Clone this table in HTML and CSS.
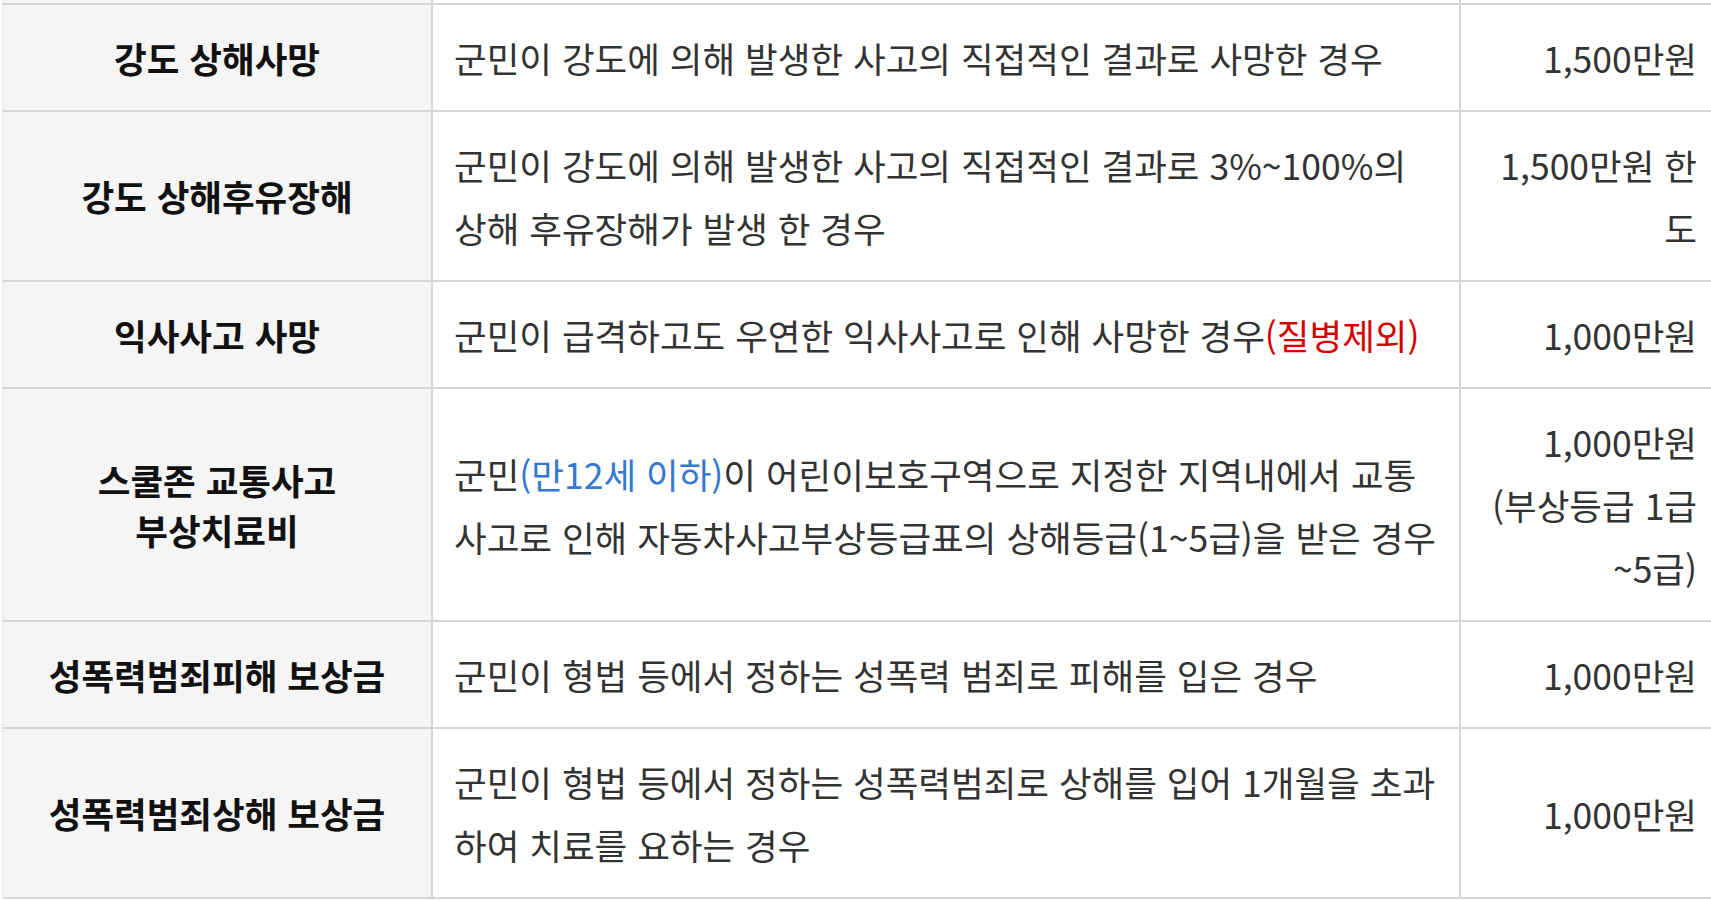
FILE: index.html
```html
<!DOCTYPE html>
<html lang="ko">
<head>
<meta charset="utf-8">
<title>보장내용</title>
<link rel="stylesheet" href="styles.css">
</head>
<body>
<div class="tbl">
  <div class="c c1 filler"></div><div class="c c2 filler"></div><div class="c c3 filler"></div>

  <div class="c c1"><p>강도 상해사망</p></div>
  <div class="c c2"><p>군민이 강도에 의해 발생한 사고의 직접적인 결과로 사망한 경우</p></div>
  <div class="c c3"><p>1,500만원</p></div>

  <div class="c c1"><p>강도 상해후유장해</p></div>
  <div class="c c2"><p>군민이 강도에 의해 발생한 사고의 직접적인 결과로 3%~100%의 상해 후유장해가 발생 한 경우</p></div>
  <div class="c c3"><p>1,500만원 한도</p></div>

  <div class="c c1"><p>익사사고 사망</p></div>
  <div class="c c2"><p>군민이 급격하고도 우연한 익사사고로 인해 사망한 경우<span class="red">(질병제외)</span></p></div>
  <div class="c c3"><p>1,000만원</p></div>

  <div class="c c1"><p>스쿨존 교통사고<br>부상치료비</p></div>
  <div class="c c2"><p>군민<span class="blue">(만12세 이하)</span>이 어린이보호구역으로 지정한 지역내에서 교통사고로 인해 자동차사고부상등급표의 상해등급(1~5급)을 받은 경우</p></div>
  <div class="c c3"><p>1,000만원<br>(부상등급 1급~5급)</p></div>

  <div class="c c1"><p>성폭력범죄피해 보상금</p></div>
  <div class="c c2"><p>군민이 형법 등에서 정하는 성폭력 범죄로 피해를 입은 경우</p></div>
  <div class="c c3"><p>1,000만원</p></div>

  <div class="c c1"><p>성폭력범죄상해 보상금</p></div>
  <div class="c c2"><p>군민이 형법 등에서 정하는 성폭력범죄로 상해를 입어 1개월을 초과하여 치료를 요하는 경우</p></div>
  <div class="c c3"><p>1,000만원</p></div>
</div>
</body>
</html>
```

FILE: styles.css
```css
html, body {
  margin: 0;
  padding: 0;
  background: #ffffff;
}

body {
  font-family: "Noto Sans CJK KR", "Noto Sans", sans-serif;
  font-size: 35.5px;
  color: #333333;
}

p {
  margin: 0;
}

.tbl {
  display: grid;
  grid-template-columns: 430px 1028px 1fr;
  margin-left: 2px;
  border-left: 1px solid #ececec;
}

.c {
  display: flex;
  flex-direction: column;
  justify-content: center;
  border-bottom: 2px solid #d6d6d6;
  padding: 21px 18px;
  line-height: 63px;
}

.c1 {
  background: #f5f5f5;
  border-right: 2px solid #d6d6d6;
  font-weight: 700;
  color: #111111;
  text-align: center;
  line-height: 50px;
}

.c2 {
  border-right: 2px solid #d6d6d6;
  text-align: left;
  padding-left: 21px;
  padding-right: 16px;
}

.c3 {
  text-align: right;
  padding-right: 14px;
}

.filler {
  height: 3px;
  padding: 0;
  line-height: 0;
}

.red {
  color: #d40000;
}

.blue {
  color: #3478d0;
}
```
